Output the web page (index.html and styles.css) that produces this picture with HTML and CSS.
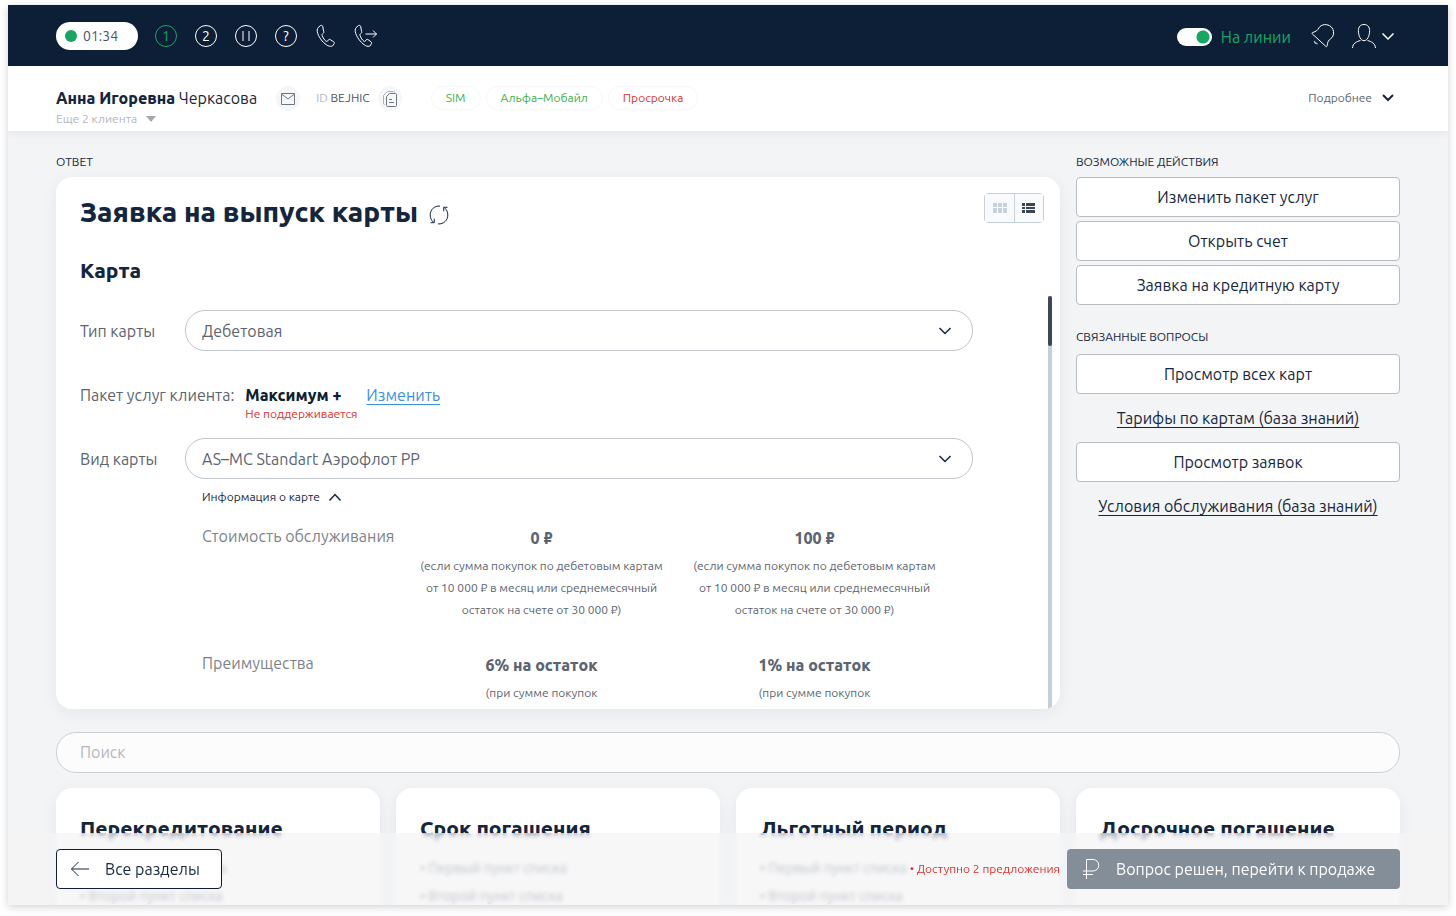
FILE: index.html
```html
<!DOCTYPE html>
<html lang="ru">
<head>
<meta charset="utf-8">
<meta name="viewport" content="width=device-width, initial-scale=1">
<title>Заявка на выпуск карты</title>
<link rel="stylesheet" href="styles.css">
</head>
<body>
<div class="app">
  <header class="topbar">
    <div class="timer"><span class="timer-dot"></span>01:34</div>
    <nav class="call-tools" aria-label="Управление звонком">
      <button class="round active" type="button">1</button>
      <button class="round" type="button">2</button>
      <button class="round" type="button" aria-label="Пауза"><svg width="10" height="12" viewBox="0 0 10 12"><path d="M2 1v10M8 1v10"/></svg></button>
      <button class="round" type="button">?</button>
      <button class="icon-btn" type="button" aria-label="Звонок"><svg width="24" height="24" viewBox="0 0 24 24"><path d="M5.400 1.600 3.200 3.500C.8 6.200 3 12.200 7.200 17c3.800 4.400 7.900 6.400 10.500 4.800l1.400-2c.5-.8.3-1.500-.4-2l-3.400-2.200c-.8-.5-1.500-.3-2 .4l-.6 1c-.6.8-1.600.6-2.700-.6-1.400-1.500-2.400-3.400-2.900-5-.3-1 .1-1.400.8-1.900.8-.5 1.100-1.200.8-2l-1-5.200c-.4-1-1.400-1.300-2.300-.7z"/></svg></button>
      <button class="icon-btn" type="button" aria-label="Перевести звонок"><svg width="26" height="24" viewBox="0 0 26 24"><path d="M5.400 1.600 3.200 3.500C.8 6.200 3 12.200 7.200 17c3.800 4.400 7.400 6.400 10 4.800l1.200-2c.5-.8.3-1.500-.4-2l-3-2.200c-.8-.5-1.500-.3-2 .4l-.6 1c-.6.8-1.400.6-2.500-.6-1.400-1.500-2.400-3.400-2.900-5-.3-1 .1-1.400.8-1.900.8-.5 1.100-1.200.8-2l-1-5.200c-.4-1-1.300-1.300-2.200-.7zM12.500 10h11M20 6.500l3.500 3.500-3.500 3.500"/></svg></button>
    </nav>
    <div class="operator">
      <label class="line-status"><input class="switch" type="checkbox" role="switch" checked>На линии</label>
      <button class="icon-btn bell" type="button" aria-label="Уведомления"><svg width="24" height="26" viewBox="0 0 24 26"><path class="clapper" d="M3 17.500c-.8 2.600 1.600 4.400 4.200 3.600z"/><path d="M1.300 10.900c-.5-.5-.3-1.200.4-1.400 3.600-1 4.800-2.200 6.200-4.600C10.200.9 16.500.6 20 3.700c3.600 3.300 3.400 9.500-.3 12-2.300 1.500-3.300 3.700-3.500 7-.1.900-.8 1.200-1.400.6z"/></svg></button>
      <button class="icon-btn" type="button" aria-label="Профиль"><svg width="44" height="26" viewBox="0 0 44 26"><path d="M1.500 25c.4-5 4-6.200 8-7.600M24.500 25c-.4-5-4-6.200-8-7.600M13 1.500c-3.600 0-5.600 2.300-5.600 6.200 0 5.700 2.500 10 5.600 10s5.600-4.300 5.600-10c0-3.900-2-6.200-5.600-6.200z"/><path class="bold" d="m31.500 10.500 5.500 5.500 5.500-5.500"/></svg></button>
    </div>
  </header>

  <section class="client">
    <div class="client-name">
      <div class="full-name"><b>Анна Игоревна</b> Черкасова</div>
      <button class="more-clients" type="button">Еще 2 клиента <span class="caret"></span></button>
    </div>
    <button class="bubble mail" type="button" aria-label="Написать"><svg width="14" height="12" viewBox="0 0 14 12"><path d="M.5.500h13v11H.5zM.500 1 7 6l6.500-5"/></svg></button>
    <div class="client-id"><span class="muted">ID</span> BEJHIC</div>
    <button class="bubble" type="button" aria-label="Скопировать"><svg width="14" height="16" viewBox="0 0 14 16"><path class="light" d="M1.500 13.500c-.6 0-1-.5-1-1v-8l4-4h6c.6 0 1 .4 1 1"/><path d="M6.500 2.500h6c.6 0 1 .4 1 1v11c0 .6-.4 1-1 1h-8c-.6 0-1-.4-1-1v-9zM6 8.500h3M6 11.500h5"/></svg></button>
    <ul class="tags">
      <li class="tag">SIM</li>
      <li class="tag">Альфа–Мобайл</li>
      <li class="tag danger">Просрочка</li>
    </ul>
    <button class="details" type="button">Подробнее <svg width="14" height="10" viewBox="0 0 14 10"><path d="m2 2 5 5 5-5"/></svg></button>
  </section>

  <main class="content">
    <div class="columns">
      <section class="answer">
        <h4 class="caption">ОТВЕТ</h4>
        <div class="card">
          <div class="card-head">
            <h1 class="title">Заявка на выпуск карты</h1>
            <button class="refresh" type="button" aria-label="Обновить"><svg width="20" height="20" viewBox="0 0 20 20"><path d="M11 1.100C5 .6 1.200 5 1.200 10c0 3 1.200 5.500 3.300 7.200M1.500 17.700h3.800v-4M9 18.900c6 .5 9.800-3.900 9.800-8.900 0-3-1.200-5.500-3.300-7.200M18.500 2.300h-3.800v4"/></svg></button>
            <div class="view-toggle">
              <button class="view grid-view" type="button" aria-label="Плитка"><svg width="14" height="12" viewBox="0 0 14 12"><path d="M0 1h4v4H0zM5 1h4v4H5zM10 1h4v4h-4zM0 6h4v5H0zM5 6h4v5H5zM10 6h4v5h-4z"/></svg></button>
              <button class="view" type="button" aria-label="Список"><svg width="14" height="12" viewBox="0 0 14 12"><path d="M0 1h3v3H0zM4 1h9v3H4zM0 5h3v2H0zM4 5h9v2H4zM0 8h3v3H0zM4 8h9v3H4z"/></svg></button>
            </div>
          </div>
          <h2 class="subtitle">Карта</h2>
          <div class="scroll">
            <form class="form">
              <div class="field">
                <label for="card-type">Тип карты</label>
                <div class="select-wrap">
                  <select id="card-type" class="select"><option>Дебетовая</option></select>
                  <svg class="chevron" width="14" height="10" viewBox="0 0 14 10"><path d="m1.500 2 5.500 5.500L12.500 2"/></svg>
                </div>
              </div>
              <div class="package">
                <span>Пакет услуг клиента:</span>
                <div class="package-value"><b>Максимум +</b><span class="error">Не поддерживается</span></div>
                <a class="change" href="#">Изменить</a>
              </div>
              <div class="field">
                <label for="card-kind">Вид карты</label>
                <div class="select-wrap">
                  <select id="card-kind" class="select"><option>AS–MC Standart Аэрофлот PP</option></select>
                  <svg class="chevron" width="14" height="10" viewBox="0 0 14 10"><path d="m1.500 2 5.500 5.500L12.500 2"/></svg>
                </div>
              </div>
              <button class="info-toggle" type="button">Информация о карте <svg width="14" height="10" viewBox="0 0 14 10"><path d="m1.500 8.500 5.500-6 5.500 6"/></svg></button>
              <table class="terms">
                <tbody>
                <tr>
                  <th scope="row">Стоимость обслуживания</th>
                  <td><b>0 ₽</b><p>(если сумма покупок по дебетовым картам<br>от 10 000 ₽ в месяц или среднемесячный<br>остаток на счете от 30 000 ₽)</p></td>
                  <td><b>100 ₽</b><p>(если сумма покупок по дебетовым картам<br>от 10 000 ₽ в месяц или среднемесячный<br>остаток на счете от 30 000 ₽)</p></td>
                </tr>
                <tr>
                  <th scope="row">Преимущества</th>
                  <td><b>6% на остаток</b><p>(при сумме покупок</p></td>
                  <td><b>1% на остаток</b><p>(при сумме покупок</p></td>
                </tr>
                </tbody>
              </table>
            </form>
            <div class="track"><div class="thumb"></div></div>
          </div>
        </div>
      </section>

      <aside class="side">
        <h4 class="caption">ВОЗМОЖНЫЕ ДЕЙСТВИЯ</h4>
        <div class="actions">
          <button class="action" type="button">Изменить пакет услуг</button>
          <button class="action" type="button">Открыть счет</button>
          <button class="action" type="button">Заявка на кредитную карту</button>
        </div>
        <h4 class="caption related">СВЯЗАННЫЕ ВОПРОСЫ</h4>
        <div class="actions">
          <button class="action" type="button">Просмотр всех карт</button>
          <a class="kb-link" href="#">Тарифы по картам (база знаний)</a>
          <button class="action" type="button">Просмотр заявок</button>
          <a class="kb-link" href="#">Условия обслуживания (база знаний)</a>
        </div>
      </aside>
    </div>

    <input class="search" type="search" placeholder="Поиск" aria-label="Поиск">

    <div class="topics">
      <article class="topic"><h3>Перекредитование</h3><ul><li>Первый пункт списка</li><li>Второй пункт списка</li></ul></article>
      <article class="topic"><h3>Срок погашения</h3><ul><li>Первый пункт списка</li><li>Второй пункт списка</li></ul></article>
      <article class="topic"><h3>Льготный период</h3><ul><li>Первый пункт списка</li><li>Второй пункт списка</li></ul></article>
      <article class="topic"><h3>Досрочное погашение</h3></article>
    </div>
  </main>

  <footer class="bottombar">
    <button class="all-sections" type="button"><svg width="20" height="16" viewBox="0 0 20 16"><path d="M19 8H1.500M8.500 1l-7 7 7 7"/></svg>Все разделы</button>
    <div class="offers">
      <span class="offers-note">Доступно 2 предложения</span>
      <button class="to-sale" type="button"><svg width="18" height="22" viewBox="0 0 18 22"><path d="M4.500 21V1.500h6.500a5 5 0 0 1 0 11.500H1M1 16.500h10"/></svg>Вопрос решен, перейти к продаже</button>
    </div>
  </footer>
</div>
</body>
</html>
```
FILE: styles.css
```css
* { box-sizing: border-box; }
body {
  margin: 0;
  height: 100vh;
  padding: 5px 8px 11px;
  display: flex;
  background: #fff;
  color: #14263d;
  font: 16px/24px Ubuntu, "Noto Sans", sans-serif;
}
h1, h2, h3, h4, p, ul { margin: 0; padding: 0; }
h1, h2, h3, b { font-weight: 800; }
button { padding: 0; border: 0; background: none; color: inherit; font: inherit; cursor: pointer; }
svg { display: block; fill: none; stroke: currentColor; flex: none; }

.app {
  position: relative;
  flex: 1;
  min-width: 0;
  overflow: hidden;
  display: flex;
  flex-direction: column;
  background: #f3f4f6;
  box-shadow: 0 2px 8px rgba(0, 0, 0, .18);
}

/* Top bar */
.topbar {
  flex: none;
  height: 61px;
  padding: 0 53px 0 48px;
  display: flex;
  align-items: center;
  background: #0c1f36;
  color: #fff;
}
.timer {
  width: 82px;
  height: 28px;
  padding-left: 9px;
  border-radius: 14px;
  display: flex;
  align-items: center;
  gap: 6px;
  background: #fff;
  color: #4a5462;
  font-size: 14px;
}
.timer-dot { width: 12px; height: 12px; border-radius: 50%; background: #17a663; }
.call-tools { display: flex; align-items: center; gap: 18px; margin-left: 17px; }
.round {
  width: 22px;
  height: 22px;
  border: 1px solid #fff;
  border-radius: 50%;
  display: grid;
  place-items: center;
  font-size: 14px;
  line-height: 20px;
}
.active { color: #17a663; border-color: #17a663; }
.call-tools .icon-btn + .icon-btn { margin-left: -4px; }
.operator { margin-left: auto; display: flex; align-items: center; gap: 16px; }
.line-status { display: flex; align-items: center; gap: 9px; padding-top: 2px; color: #17a663; }
.switch {
  appearance: none;
  width: 35px;
  height: 18px;
  margin: 0;
  border-radius: 9px;
  background: radial-gradient(circle at 26px 9px, #17a663 6px, #fff 7px);
}
.bell { margin-left: 4px; }
.clapper { fill: #a9b3c4; stroke: none; }
.bold { stroke-width: 1.500; }

/* Client bar */
.client {
  position: relative;
  flex: none;
  height: 65px;
  padding: 20px 53px 0 48px;
  display: flex;
  align-items: flex-start;
  background: #fff;
  font-size: 12px;
  box-shadow: 0 2px 8px rgba(20, 38, 61, .08);
}
.full-name { font-size: 16px; line-height: 25px; }
.more-clients { display: flex; align-items: center; gap: 9px; color: #b4b8be; line-height: 16px; }
.caret { border: 5px solid transparent; border-top: 6px solid #a3a8af; border-bottom: 0; }
.bubble {
  width: 24px;
  height: 25px;
  border-radius: 50%;
  display: grid;
  place-items: center;
  background: #f5f6f8;
  color: #6d7682;
}
.mail { margin-left: 19px; }
.light { stroke: #aab0b8; }
.client-id { margin: 0 8px 0 16px; color: #4a5462; }
.muted { color: #b4b8be; }
.tags { margin: 0 0 0 29px; display: flex; gap: 5px; list-style: none; }
.tag {
  padding: 0 14px;
  border: 1px solid #f8f8fa;
  border-radius: 14px;
  color: #3db04b;
  line-height: 22px;
}
.danger { color: #e0302c; }
.details { margin-left: auto; display: flex; align-items: center; gap: 9px; color: #5b6470; }
.details svg { color: #14263d; stroke-width: 2; }

/* Content */
.content { padding: 0 48px; }
.columns { display: grid; grid-template-columns: minmax(0, 1fr) 324px; column-gap: 16px; }
.caption { padding: 22px 0 7px; font-size: 12px; line-height: 17px; font-weight: 400; }
.card {
  display: flex;
  flex-direction: column;
  border-radius: 16px;
  overflow: hidden;
  background: #fff;
}
.answer .card { box-shadow: 0 4px 16px rgba(20, 38, 61, .06); }
.card-head { display: flex; align-items: flex-start; padding: 15px 16px 0 24px; }
.title { font-size: 28px; line-height: 40px; }
.refresh { margin: 13px 0 0 11px; }
.view-toggle {
  margin-top: 1px;
  margin-left: auto;
  height: 30px;
  display: flex;
  border: 1px solid #c6d0d9;
  border-radius: 4px;
}
.view { width: 29px; display: grid; place-items: center; background: #f9fafb; color: #3a4454; }
.view svg { fill: currentColor; stroke: none; }
.view + .view { border-left: 1px solid #c6d0d9; }
.grid-view { color: #c6d2dd; }
.subtitle { padding: 22px 24px 10px; font-size: 21px; line-height: 32px; }
.scroll {
  height: calc(100vh - 503px);
  display: grid;
  grid-template-columns: minmax(0, 1fr) 4px;
  padding-right: 8px;
  overflow: hidden;
}
.track { height: 100%; background: #c3d0dd; }
.thumb { height: 50px; border-radius: 2px; background: #3d4557; }
.form { padding: 14px 75px 0 24px; color: #5b6470; min-height: 0; }
.field { display: grid; grid-template-columns: 105px minmax(0, 1fr); align-items: center; }
.select-wrap { position: relative; }
.select {
  display: block;
  appearance: none;
  width: 100%;
  height: 41px;
  padding: 0 16px;
  border: 1px solid #c2c5c9;
  border-radius: 20px;
  background: #fff;
  color: #5b6470;
  font: inherit;
}
.chevron { position: absolute; right: 21px; top: 16px; color: #14263d; stroke-width: 1.500; pointer-events: none; }
.package { display: flex; height: 87px; padding-top: 32px; gap: 9px; }
.package-value { display: flex; flex-direction: column; width: 112px; margin-left: 2px; }
.package-value b { color: #0c1f36; white-space: nowrap; }
.error { color: #e0302c; font-size: 12px; line-height: 14px; white-space: nowrap; }
.change { color: #3d8fe0; text-underline-offset: 3px; align-self: flex-start; }
.info-toggle { display: flex; align-items: center; gap: 8px; margin: 6px 0 0 122px; color: #14263d; font-size: 12px; }
.info-toggle svg { stroke-width: 1.500; }
.terms { margin: 15px 0 0 122px; border-collapse: collapse; table-layout: fixed; width: 749px; }
.terms th { width: 203px; padding: 0; text-align: left; vertical-align: top; font-weight: 400; color: #7c828c; }
.terms td { padding: 2px 0 30px; text-align: center; vertical-align: top; }
.terms b { display: block; }
.terms p { padding-top: 5px; font-size: 12px; line-height: 22px; white-space: nowrap; }

/* Side column */
.actions { display: flex; flex-direction: column; gap: 4px; }
.action {
  height: 40px;
  border: 1px solid #b9bdc2;
  border-radius: 4px;
  background: #fff;
}
.related { padding-top: 23px; padding-bottom: 9px; }
.kb-link { align-self: center; color: inherit; line-height: 40px; text-underline-offset: 3px; }

/* Search and topics */
.search {
  display: block;
  width: 100%;
  height: 41px;
  margin: 23px 0 15px;
  padding: 0 23px 2px;
  border: 1px solid #cdd0d3;
  border-radius: 20px;
  background: #fcfcfd;
  font: inherit;
}
.search::placeholder { color: #b4b8be; opacity: 1; }
.topics { display: grid; grid-template-columns: repeat(4, minmax(0, 1fr)); gap: 16px; }
.topic {
  height: 180px;
  padding: 24px;
  border-radius: 16px;
  background: #fff;
  box-shadow: 0 4px 16px rgba(20, 38, 61, .06);
}
.topic h3 { font-size: 21px; line-height: 32px; white-space: nowrap; }
.topic ul { padding-top: 10px; list-style: none; font-size: 14px; line-height: 28px; color: #4a5462; }
.topic li::before { content: "• "; }

/* Bottom bar */
.bottombar {
  position: absolute;
  left: 0;
  right: 0;
  bottom: 0;
  height: 72px;
  padding: 0 48px;
  display: flex;
  align-items: center;
  justify-content: space-between;
  background: rgba(244, 244, 245, .7);
  backdrop-filter: blur(2px);
}
.all-sections {
  width: 166px;
  height: 40px;
  padding-left: 13px;
  border: 1px solid #0c1f36;
  border-radius: 4px;
  display: flex;
  align-items: center;
  gap: 15px;
  background: #fff;
}
.offers { display: flex; align-items: center; gap: 7px; }
.offers-note { color: #e0302c; font-size: 12px; }
.offers-note::before { content: "• "; }
.to-sale {
  width: 333px;
  height: 40px;
  padding-left: 15px;
  border-radius: 4px;
  display: flex;
  align-items: center;
  gap: 16px;
  background: #848e99;
  color: #fff;
}
```
